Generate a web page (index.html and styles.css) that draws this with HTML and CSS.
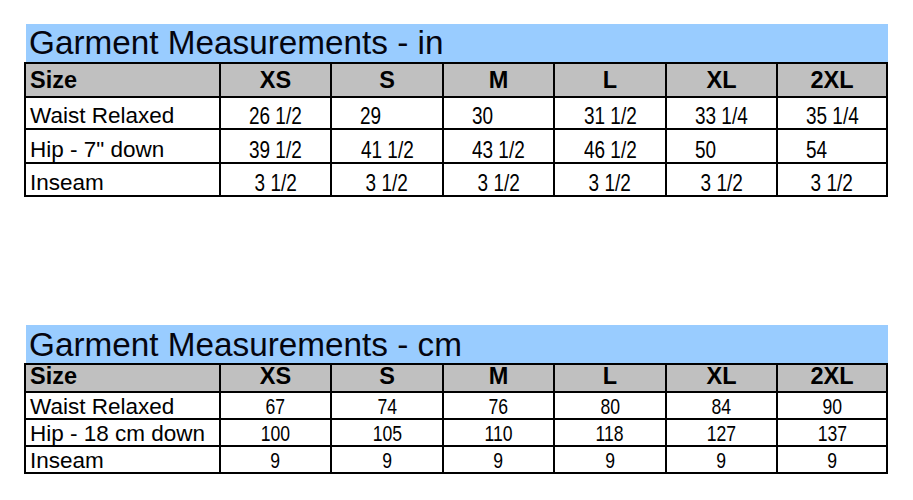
FILE: index.html
```html
<!DOCTYPE html>
<html lang="en">
<head>
<meta charset="utf-8">
<title>Garment Measurements</title>
<link rel="stylesheet" href="styles.css">
</head>
<body>
<main class="sheet">
  <section class="chart chart-in">
    <h2 class="chart-title">Garment Measurements - in</h2>
    <table class="grid">
      <thead>
        <tr class="head">
          <th class="label">Size</th><th>XS</th><th>S</th><th>M</th><th>L</th><th>XL</th><th>2XL</th>
        </tr>
      </thead>
      <tbody>
        <tr class="r1">
          <td class="label">Waist Relaxed</td><td class="num"><span class="n">26 1/2</span></td><td class="num left"><span class="n">29</span></td><td class="num left"><span class="n">30</span></td><td class="num"><span class="n">31 1/2</span></td><td class="num"><span class="n">33 1/4</span></td><td class="num"><span class="n">35 1/4</span></td>
        </tr>
        <tr class="r2">
          <td class="label">Hip - 7" down</td><td class="num"><span class="n">39 1/2</span></td><td class="num"><span class="n">41 1/2</span></td><td class="num"><span class="n">43 1/2</span></td><td class="num"><span class="n">46 1/2</span></td><td class="num left"><span class="n">50</span></td><td class="num left"><span class="n">54</span></td>
        </tr>
        <tr class="r3">
          <td class="label">Inseam</td><td class="num"><span class="n">3 1/2</span></td><td class="num"><span class="n">3 1/2</span></td><td class="num"><span class="n">3 1/2</span></td><td class="num"><span class="n">3 1/2</span></td><td class="num"><span class="n">3 1/2</span></td><td class="num"><span class="n">3 1/2</span></td>
        </tr>
      </tbody>
    </table>
  </section>

  <section class="chart chart-cm">
    <h2 class="chart-title">Garment Measurements - cm</h2>
    <table class="grid">
      <thead>
        <tr class="head">
          <th class="label">Size</th><th>XS</th><th>S</th><th>M</th><th>L</th><th>XL</th><th>2XL</th>
        </tr>
      </thead>
      <tbody>
        <tr class="r1">
          <td class="label">Waist Relaxed</td><td class="num"><span class="n">67</span></td><td class="num"><span class="n">74</span></td><td class="num"><span class="n">76</span></td><td class="num"><span class="n">80</span></td><td class="num"><span class="n">84</span></td><td class="num"><span class="n">90</span></td>
        </tr>
        <tr class="r2">
          <td class="label">Hip - 18 cm down</td><td class="num"><span class="n">100</span></td><td class="num"><span class="n">105</span></td><td class="num"><span class="n">110</span></td><td class="num"><span class="n">118</span></td><td class="num"><span class="n">127</span></td><td class="num"><span class="n">137</span></td>
        </tr>
        <tr class="r3">
          <td class="label">Inseam</td><td class="num"><span class="n">9</span></td><td class="num"><span class="n">9</span></td><td class="num"><span class="n">9</span></td><td class="num"><span class="n">9</span></td><td class="num"><span class="n">9</span></td><td class="num"><span class="n">9</span></td>
        </tr>
      </tbody>
    </table>
  </section>
</main>
</body>
</html>
```

FILE: styles.css
```css
html, body {
  margin: 0;
  padding: 0;
  background: #ffffff;
}

body {
  font-family: "Liberation Sans", Arial, sans-serif;
  color: #000000;
}

.sheet {
  padding: 24px 0 0 24px;
  width: 864px;
}

.chart-cm {
  margin-top: 128px;
}

.chart-title {
  margin: 0 0 0 2px;
  height: 38px;
  box-sizing: border-box;
  background: #99ccff;
  font-weight: normal;
  font-size: 33.3px;
  line-height: 34px;
  padding: 0 0 2px 3px;
  display: flex;
  align-items: flex-end;
  color: #05050f;
}

.chart-cm .chart-title {
  padding-bottom: 1px;
}

.grid {
  border-collapse: separate;
  border-spacing: 0;
  border-top: 2px solid #000;
  border-left: 2px solid #000;
  table-layout: fixed;
  width: 864px;
}

.grid th,
.grid td {
  box-sizing: border-box;
  border-right: 2px solid #000;
  border-bottom: 2px solid #000;
  padding: 0;
  vertical-align: bottom;
  text-align: center;
  white-space: nowrap;
}

.grid th:nth-child(1) { width: 195px; }
.grid th:nth-child(2) { width: 111px; }
.grid th:nth-child(3) { width: 112px; }
.grid th:nth-child(4) { width: 111px; }
.grid th:nth-child(5) { width: 112px; }
.grid th:nth-child(6) { width: 111px; }
.grid th:nth-child(7) { width: 110px; }

.grid th {
  background: #c0c0c0;
  font-weight: bold;
  font-size: 23.5px;
  line-height: 23px;
  padding-bottom: 4px;
}

.grid .label {
  text-align: left;
  padding-left: 4px;
}

.grid td.label {
  font-size: 22.5px;
  line-height: 22px;
  padding-bottom: 1px;
}

.grid td.num {
  font-size: 24px;
  line-height: 23px;
  padding-bottom: 1px;
}

.n {
  display: inline-block;
  transform: scaleX(0.79);
  transform-origin: center bottom;
}

.grid td.left {
  text-align: left;
  padding-left: 28px;
}

.grid td.left .n {
  transform-origin: left bottom;
}

/* inch table rows */
.chart-in .head th { height: 34px; }
.chart-in .r1 td { height: 32px; }
.chart-in .r2 td { height: 34px; }
.chart-in .r3 td { height: 33px; }

/* centimetre table rows */
.chart-cm .head th { height: 28px; padding-bottom: 3px; }
.chart-cm .r1 td { height: 27px; }
.chart-cm .r2 td { height: 27px; }
.chart-cm .r3 td { height: 27px; }

.chart-cm td.num {
  font-size: 22px;
  line-height: 21px;
  padding-bottom: 1px;
}

.chart-cm .n {
  transform: scaleX(0.8);
}

.chart-cm td.label {
  padding-bottom: 0;
}
```
